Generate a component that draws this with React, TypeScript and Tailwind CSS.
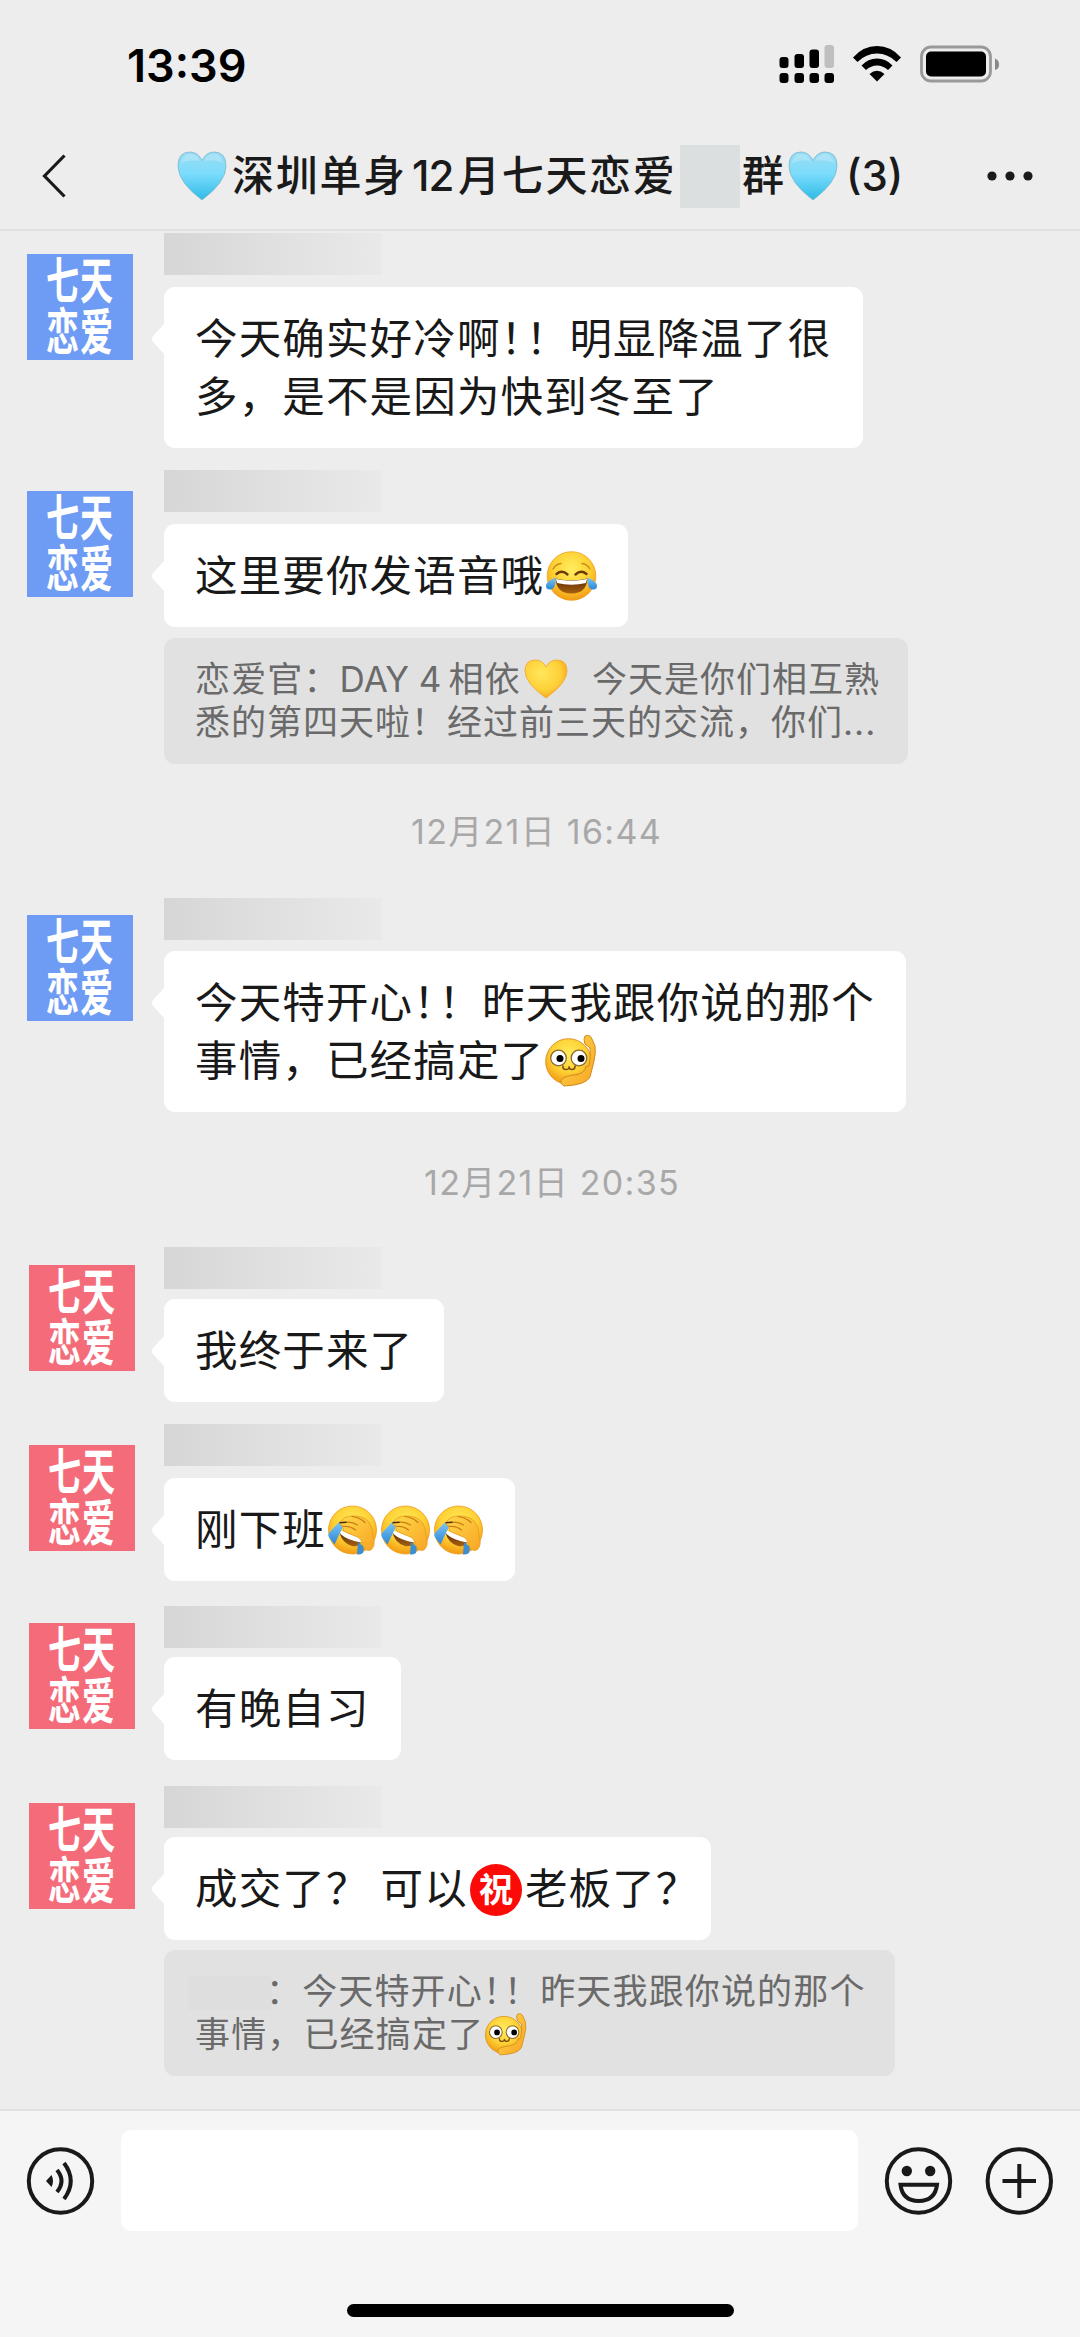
import React from "react";

type Message = {
  id: number;
  side: "blue" | "red";
  // space above the row, avatar offset, name-to-bubble gap, bubble width
  top: string;
  avatarTop: string;
  gap: string;
  width: string;
  lines: React.ReactNode[];
  quote?: { box: string; lines: React.ReactNode[] };
  time?: { box: string; text: string };
};

const FaceDefs = () => (
  <svg className="absolute h-0 w-0" aria-hidden="true">
    <defs>
      <radialGradient id="face" cx="50%" cy="35%" r="65%">
        <stop offset="0%" stopColor="#ffed5e" />
        <stop offset="60%" stopColor="#fdd033" />
        <stop offset="100%" stopColor="#f29a13" />
      </radialGradient>
      <linearGradient id="hand" x1="0" y1="0" x2="1" y2="1">
        <stop offset="0%" stopColor="#ffd84a" />
        <stop offset="100%" stopColor="#f9a523" />
      </linearGradient>
      <linearGradient id="tear" x1="0" y1="0" x2="0" y2="1">
        <stop offset="0%" stopColor="#7cc6f5" />
        <stop offset="100%" stopColor="#2a86d8" />
      </linearGradient>
      <linearGradient id="mouth" x1="0" y1="0" x2="0" y2="1">
        <stop offset="0%" stopColor="#5a2a05" />
        <stop offset="100%" stopColor="#a55f10" />
      </linearGradient>
      <radialGradient id="yellowHeart" cx="40%" cy="35%" r="70%">
        <stop offset="0%" stopColor="#ffe75a" />
        <stop offset="65%" stopColor="#fdcf37" />
        <stop offset="100%" stopColor="#f6a01c" />
      </radialGradient>
      <linearGradient id="blueHeart" x1="0" y1="0" x2="0" y2="1">
        <stop offset="0%" stopColor="#9adcf2" />
        <stop offset="45%" stopColor="#7cdcfc" />
        <stop offset="100%" stopColor="#2dbbe6" />
      </linearGradient>
    </defs>
  </svg>
);

const Joy = () => (
  <svg className="ml-px inline-block h-[52px] w-[53px] align-[-11px]" viewBox="0 0 53 52">
    <circle cx="26.5" cy="26" r="24.3" fill="url(#face)" stroke="#ee9d1c" strokeWidth="0.8" />
    <path d="M8 19q3-5 8-5.500M45 19q-3-5-8-5.500" fill="none" stroke="#c98a14" strokeWidth="1.300" strokeLinecap="round" />
    <path d="M11.500 24q5.500-4.500 11 .5M41.500 24q-5.500-4.500-11 .5" fill="none" stroke="#6b3a08" strokeWidth="2.400" strokeLinecap="round" />
    <path d="M10.500 28.500q16 4 32 0q-1 15-16 15t-16-15z" fill="url(#mouth)" />
    <path d="M11 29q15.500 3.500 31 0l-1 4q-14.500 3.500-29 0z" fill="#fff" />
    <path d="M10.500 27.500q.5 12-5.500 12q-4.500 0-4-4.500q.5-3.500 9.500-7.500zM42.500 27.500q-.5 12 5.500 12q4.500 0 4-4.500q-.5-3.500-9.500-7.500z" fill="url(#tear)" />
  </svg>
);

const Facepalm = () => (
  <svg className="inline-block h-[52px] w-[53px] align-[-11px]" viewBox="0 0 53 52">
    <circle cx="26.500" cy="26" r="24" fill="url(#face)" stroke="#ee9d1c" strokeWidth="0.8" />
    <path d="M13 27L36 35.500q-1 8-10 6.500q-10-2.500-13-15z" fill="url(#mouth)" />
    <path d="M13 26L36 34.500l-.5 4q-14-2-21-8.500z" fill="#fff" />
    <path d="M12.500 18.500l6.500 1.500q-2 2-10.500 20.500l-5-6.500q-2-3-.5-5z" fill="url(#tear)" />
    <path d="M32 38l6 5l-1 6q-3 2-6 1.500z" fill="#3b8ed4" />
    <path d="M14 18.500q4-6.500 12-6.500q11-.5 17 6q4 5 4 14q3 9-1.500 13.500q-4 2.500-7.500-1.500q-2-8-5.500-10.500l-13-5.500q-3-1-2-3q-2-2-.5-3.500l-3-.5z" fill="url(#hand)" stroke="#e59a1d" strokeWidth="0.800" />
    <path d="M18.500 18.500q7-1.500 13 2.500M17.500 22.500q7-.5 12 3.500M26 12.500q8 1 13 6" fill="none" stroke="#c77d12" strokeWidth="1.200" strokeLinecap="round" />
    <path d="M13.500 18.700l7-.5" stroke="#4a2a08" strokeWidth="1.500" />
  </svg>
);

const Salute = ({ small = false }) => (
  <svg
    className={
      small
        ? "inline-block h-[43px] w-[44px] align-[-9px]"
        : "inline-block h-[52px] w-[54px] align-[-11px]"
    }
    viewBox="0 0 54 52"
  >
    <circle cx="24.500" cy="26.500" r="22.800" fill="url(#face)" stroke="#dd9422" strokeWidth="1" />
    <path
      d="M41 1Q46-1 48 4L51 11Q52 18 50 26Q48 34 46 42Q42 50 20 51Q16 49 17 45Q20 41 33 39.500Q41 38 42 31Q45 33 45.500 28Q47 20 46 13L41 9Q39 4 41 1z"
      fill="url(#hand)"
      stroke="#cf8a20"
      strokeWidth="1"
    />
    <circle cx="14.500" cy="23" r="7.800" fill="#fff" stroke="#8b6a2c" strokeWidth="1.300" />
    <circle cx="35" cy="23" r="7.800" fill="#fff" stroke="#8b6a2c" strokeWidth="1.300" />
    <circle cx="16" cy="23.500" r="3.500" fill="#000" />
    <circle cx="37" cy="23.500" r="3.500" fill="#000" />
    <path d="M19 31q-.5 3.500 3 3.500t3-3q0 3 3 3t3-3.500" fill="none" stroke="#7a4a10" strokeWidth="1.600" strokeLinecap="round" />
  </svg>
);

const YellowHeart = () => (
  <svg className="ml-[3px] inline-block h-[40px] w-[44px] align-[-7px]" viewBox="0 0 44 40">
    <path d="M22 39Q1 24 1 12Q1 1 11.500 1Q18.500 1 22 8Q25.500 1 32.500 1Q43 1 43 12Q43 24 22 39z" fill="url(#yellowHeart)" stroke="#f4a428" strokeWidth="0.800" />
  </svg>
);

const BlueHeart = () => (
  <svg className="h-[50px] w-[50px] shrink-0" viewBox="0 0 50 50">
    <path d="M25 49Q1 31 1 15Q1 1 13 1Q21 1 25 9.500Q29 1 37 1Q49 1 49 15Q49 31 25 49z" fill="url(#blueHeart)" stroke="#7cb8cc" strokeWidth="0.800" />
    <path d="M4 12Q6 3 13 3Q20 3 23 10Q12 8 4 12zM46 12Q44 3 37 3Q30 3 27 10Q38 8 46 12z" fill="#fff" opacity="0.220" />
  </svg>
);

const Congrats = () => (
  <span className="ml-[2px] mr-[3px] inline-flex h-[52px] w-[52px] items-center justify-center rounded-full bg-[#fb0a08] align-[2px] text-[34px] font-bold leading-none tracking-normal text-white">
    祝
  </span>
);

// two full width marks set tight
const Bangs = ({ small = false }) => (
  <>
    <span className={small ? "-mr-[15px]" : "-mr-[18.500px]"}>！</span>！
  </>
);

const messages: Message[] = [
  {
    id: 1,
    side: "blue",
    top: "mt-[2px]",
    avatarTop: "mt-[21px]",
    gap: "mt-[12px]",
    width: "w-[699px]",
    lines: [<>今天确实好冷啊<Bangs />明显降温了很</>, "多，是不是因为快到冬至了"],
  },
  {
    id: 2,
    side: "blue",
    top: "mt-[22px]",
    avatarTop: "mt-[21px]",
    gap: "mt-[12px]",
    width: "w-[464px]",
    lines: [<>这里要你发语音哦<Joy /></>],
    quote: {
      box: "mt-[11px] w-[744px]",
      lines: [
        <>
          恋爱官：<span className="inline-block w-[109px] tracking-normal">DAY 4</span>相依
          <YellowHeart />
          <span className="ml-[24px] tracking-[1px]">今天是你们相互熟</span>
        </>,
        <span className="tracking-[1px]">悉的第四天啦！经过前三天的交流，你们...</span>,
      ],
    },
  },
  {
    id: 3,
    side: "blue",
    time: { box: "mt-[44px] pr-[7px]", text: "12月21日 16:44" },
    top: "mt-[42px]",
    avatarTop: "mt-[17px]",
    gap: "mt-[11px]",
    width: "w-[742px]",
    lines: [<>今天特开心<Bangs />昨天我跟你说的那个</>, <>事情，已经搞定了<Salute /></>],
  },
  {
    id: 4,
    side: "red",
    time: { box: "mt-[47px] pl-[24px]", text: "12月21日 20:35" },
    top: "mt-[40px]",
    avatarTop: "mt-[18px]",
    gap: "mt-[10px]",
    width: "w-[280px]",
    lines: ["我终于来了"],
  },
  {
    id: 5,
    side: "red",
    top: "mt-[22px]",
    avatarTop: "mt-[21px]",
    gap: "mt-[12px]",
    width: "w-[351px]",
    lines: [<>刚下班<Facepalm /><Facepalm /><Facepalm /></>],
  },
  {
    id: 6,
    side: "red",
    top: "mt-[25px]",
    avatarTop: "mt-[17px]",
    gap: "mt-[9px]",
    width: "w-[237px]",
    lines: ["有晚自习"],
  },
  {
    id: 7,
    side: "red",
    top: "mt-[26px]",
    avatarTop: "mt-[17px]",
    gap: "mt-[9px]",
    width: "w-[547px]",
    lines: [<>成交了？<span className="ml-[11px]">可以</span><Congrats />老板了？</>],
    quote: {
      box: "mt-[10px] w-[731px]",
      lines: [
        <>
          <span className="-ml-[7px] mr-[-6px] inline-block h-[34px] w-[84px] bg-[#dedede] align-[-6px]" />
          ：今天特开心<Bangs small />昨天我跟你说的那个
        </>,
        <>事情，已经搞定了<Salute small /></>,
      ],
    },
  },
];

const StatusBar = () => (
  <div className="flex h-[128px] items-center justify-between pl-[127px] pr-[79px]">
    <div className="mt-[2px] text-[45px] font-semibold leading-none text-black">13:39</div>
    <svg className="h-[42px] w-[222px]" viewBox="0 0 222 42">
      <rect x="0.500" y="14" width="9" height="11" rx="3" />
      <rect x="15.500" y="11" width="9.500" height="14" rx="3" />
      <rect x="30.500" y="6.500" width="9.500" height="18.500" rx="3" />
      <rect x="45.500" y="2" width="9.500" height="23" rx="3" fill="#bfbfbf" />
      <rect x="0.500" y="30" width="9" height="10" rx="3" />
      <rect x="15.500" y="30" width="9.500" height="10" rx="3" />
      <rect x="30.500" y="30" width="9.500" height="10" rx="3" />
      <rect x="45.500" y="30" width="9.500" height="10" rx="3" />
      <g transform="translate(74 3)">
        <path d="M0 11.500Q10 0 24 0T48 11.500L43.500 16Q35 7.500 24 7.500T4.500 16z" />
        <path d="M8.500 19.500Q15 12.500 24 12.500T39.500 19.500L35 24Q30 19.500 24 19.500T13 24z" />
        <path d="M16.500 28Q24 21.500 31.500 28L24 35.500z" />
      </g>
      <rect x="142.500" y="4" width="69" height="34" rx="9.500" fill="none" stroke="#999" strokeWidth="2.800" />
      <rect x="147" y="8.500" width="60" height="25" rx="5" />
      <path d="M216 15.500Q220 17 220 21.500T216 27z" fill="#888" />
    </svg>
  </div>
);

const TitleBar = () => (
  <div className="flex h-[103px] items-center border-b-2 border-[#e0e0e0] pl-[42px] pr-[47px] text-[#1a1a1a]">
    <svg className="-mt-[5px] h-[44px] w-[26px]" viewBox="0 0 26 44" fill="none" stroke="#1a1a1a" strokeWidth="3.200">
      <path d="M22.500 1.500L2.500 22L22.500 42.500" />
    </svg>
    <div className="-mt-[5px] ml-[109px] flex items-center whitespace-nowrap text-[42px] font-medium leading-[60px] tracking-[1.700px]">
      <BlueHeart />
      <span className="ml-[5px] w-[174px]">深圳单身</span>
      <span className="ml-[6px] w-[46px] tracking-[-1px]">12</span>
      <span className="w-[222px]">月七天恋爱</span>
      <span className="-mr-px h-[63px] w-[60px] bg-[#dcdfdf]" />
      <span className="ml-[3px] w-[46px]">群</span>
      <BlueHeart />
      <span className="ml-[8px] tracking-normal">(3)</span>
    </div>
    <svg className="-mt-[5px] ml-auto h-[10px] w-[46px]" viewBox="0 0 46 10" fill="#1a1a1a">
      <circle cx="5" cy="5" r="4.600" />
      <circle cx="23" cy="5" r="4.600" />
      <circle cx="41" cy="5" r="4.600" />
    </svg>
  </div>
);

const Avatar = ({ side, top }: { side: "blue" | "red"; top: string }) => (
  <div
    className={`${top} ${
      side === "blue" ? "ml-[27px] mr-[31px] bg-[#6e9bf3]" : "ml-[29px] mr-[29px] bg-[#f46c7a]"
    } flex h-[106px] w-[106px] shrink-0 items-center justify-center`}
  >
    <div className="w-[106px] shrink-0 scale-x-[0.66] text-center text-[50px] font-bold leading-[51px] tracking-[1.500px] text-white">
      七天
      <br />
      恋爱
    </div>
  </div>
);

const Row = ({ m }: { m: Message }) => (
  <>
    {m.time && (
      <div
        className={`${m.time.box} h-[48px] text-center text-[34px] leading-[48px] tracking-[1.300px] text-[#a8a8a8]`}
      >
        {m.time.text}
      </div>
    )}
    <div className={`${m.top} flex items-start`}>
      <Avatar side={m.side} top={m.avatarTop} />
      <div className="flex flex-col items-start">
        <div className="h-[42px] w-[218px] bg-linear-to-r from-[#d7d6d6] via-[#e0e0e0] to-[#e9e9e9]" />
        <div
          className={`${m.gap} ${m.width} relative whitespace-nowrap rounded-[11px] bg-white pb-[22px] pl-[31px] pt-[23px] text-[42.500px] leading-[58px] tracking-[1.150px] text-[#191919]`}
        >
          <svg className="absolute -left-[13px] top-[36px] h-[32px] w-[14px]" viewBox="0 0 14 32" fill="#fff">
            <path d="M14 0L2 13Q0 16 2 19L14 32z" />
          </svg>
          {m.lines.map((line, i) => (
            <div key={i} className="h-[58px]">
              {line}
            </div>
          ))}
        </div>
        {m.quote && (
          <div
            className={`${m.quote.box} h-[126px] whitespace-nowrap rounded-[11px] bg-[#e1e1e1] pl-[31px] pt-[20px] text-[35px] leading-[43px] tracking-[1.150px] text-[#6a6a6a]`}
          >
            {m.quote.lines.map((line, i) => (
              <div key={i} className="h-[43px]">
                {line}
              </div>
            ))}
          </div>
        )}
      </div>
    </div>
  </>
);

const InputBar = () => (
  <div className="flex h-[228px] flex-col border-t-2 border-[#e0e0e0] bg-[#f5f5f5]">
    <div className="mt-[19px] flex items-center">
      <svg className="ml-[26px] h-[70px] w-[70px]" viewBox="0 0 70 70" fill="none" stroke="#191919" strokeWidth="4">
        <circle cx="34.500" cy="35" r="31.700" />
        <path d="M20 35L25.500 29Q28.500 35 25.500 41z" fill="#191919" stroke="none" />
        <path d="M31 24Q40 35 31 46M38 17Q51.500 35 38 53" />
      </svg>
      <div className="ml-[25px] h-[101px] w-[737px] rounded-[10px] bg-white" />
      <svg className="ml-[25px] h-[70px] w-[70px]" viewBox="0 0 70 70" fill="none" stroke="#191919" strokeWidth="4">
        <circle cx="35.500" cy="35" r="31.700" />
        <circle cx="23.800" cy="25" r="5.200" fill="#191919" stroke="none" />
        <circle cx="47.200" cy="25" r="5.200" fill="#191919" stroke="none" />
        <path d="M17.500 38.800H54Q52 55 35.700 55T17.500 38.800z" />
      </svg>
      <svg className="ml-[31px] h-[70px] w-[70px]" viewBox="0 0 70 70" fill="none" stroke="#191919" strokeWidth="4">
        <circle cx="35.300" cy="35" r="31.700" />
        <path d="M18.500 35H52M35.300 18V52" />
      </svg>
    </div>
    <div className="mx-auto mt-[73px] h-[13px] w-[387px] rounded-full bg-black" />
  </div>
);

const App = () => {
  return (
    <div
      lang="zh-CN"
      className="flex h-[2337px] w-[1080px] flex-col overflow-hidden bg-[#ededed] font-['Inter','Noto_Sans_CJK_SC',sans-serif]"
    >
      <FaceDefs />
      <StatusBar />
      <TitleBar />
      <div className="flex flex-1 flex-col overflow-hidden">
        {messages.map((m) => (
          <Row key={m.id} m={m} />
        ))}
      </div>
      <InputBar />
    </div>
  );
};

export default App;
